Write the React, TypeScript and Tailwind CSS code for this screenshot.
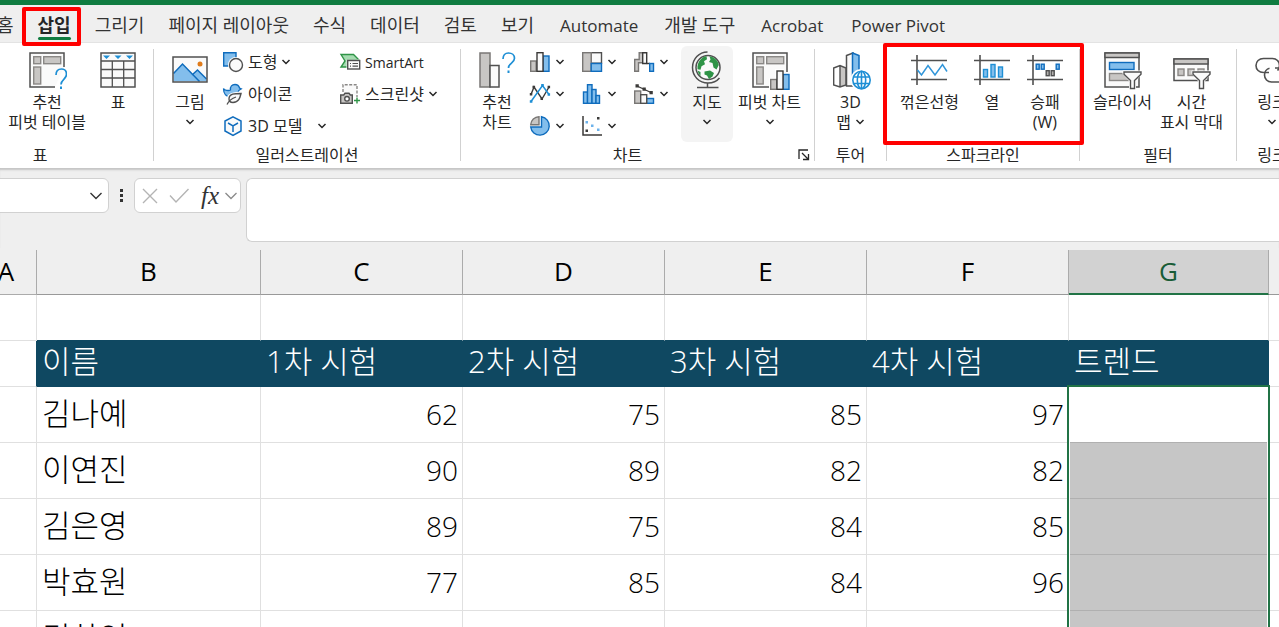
import React from "react";
import type { ReactNode } from "react";
import clsx from "clsx";

const tabs = [
  "홈",
  "삽입",
  "그리기",
  "페이지 레이아웃",
  "수식",
  "데이터",
  "검토",
  "보기",
  "Automate",
  "개발 도구",
  "Acrobat",
  "Power Pivot",
];

const columns = ["B", "C", "D", "E", "F", "G"];
const headings = ["이름", "1차 시험", "2차 시험", "3차 시험", "4차 시험", "트렌드"];

const students = [
  { name: "김나예", scores: [62, 75, 85, 97] },
  { name: "이연진", scores: [90, 89, 82, 82] },
  { name: "김은영", scores: [89, 75, 84, 85] },
  { name: "박효원", scores: [77, 85, 84, 96] },
  { name: "김하인", scores: [] },
];

/* ---------- icons ---------- */

const GRAY = "#505050";
const FILL = "#c8c6c4";
const BLUE = "#0f6cbd";
const SKY = "#83beec";

function Chevron({ className }: { className?: string }) {
  return (
    <svg width="10" height="8" viewBox="0 0 10 8" fill="none" className={clsx("shrink-0", className)}>
      <path d="M1.500 2 5 5.500 8.500 2" stroke="#262626" strokeWidth="1.500" />
    </svg>
  );
}

function BigIcon({ children }: { children: ReactNode }) {
  return (
    <svg width="40" height="40" viewBox="0 0 40 40" fill="none" className="mb-0.5 shrink-0">
      {children}
    </svg>
  );
}

function SmallIcon({ children }: { children: ReactNode }) {
  return (
    <svg width="22" height="22" viewBox="0 0 22 22" fill="none" className="shrink-0">
      {children}
    </svg>
  );
}

function PivotTableIcon() {
  return (
    <BigIcon>
      <path d="M37 17V3H3v34h25" fill="#fafafa" stroke={GRAY} strokeWidth="1.5" />
      <g fill={FILL} stroke="#8a8886" strokeWidth="1.4">
        <rect x="6.7" y="6.7" width="7" height="7" />
        <rect x="16.7" y="6.7" width="17" height="7" />
        <rect x="6.7" y="17" width="7" height="17" />
      </g>
      <path d="M29 25c0-4 2.200-6 5.500-6s5 2.200 5 5.300c0 5-5.500 5-5.500 10.200" stroke="#1e8fd5" strokeWidth="1.7" />
      <rect x="33" y="36.5" width="2" height="2.5" fill="#1e8fd5" />
    </BigIcon>
  );
}

function TableIcon() {
  return (
    <BigIcon>
      <rect x="3" y="3" width="34" height="34" fill="#fafafa" stroke={GRAY} strokeWidth="1.5" />
      <path d="M3 11h34M3 19.500h34M3 28h34M14.300 11v26M25.700 11v26" stroke={GRAY} strokeWidth="1.3" />
      <path d="M5 5.500h7L8.500 9zM16.500 5.500h7L20 9zM28 5.500h7L31.500 9z" fill="#1e8fd5" />
    </BigIcon>
  );
}

function PictureIcon() {
  return (
    <BigIcon>
      <rect x="3" y="7" width="34" height="25" fill="#fafafa" />
      <path d="M3.700 23 12.500 14l17 17.300H3.700z" fill={SKY} />
      <path d="M22 25l5.500-5 9 9v2.300h-8z" fill={SKY} />
      <path d="M3.500 23.500 12.500 14l17 17.500M22 25l5.500-5 9 9" stroke={BLUE} strokeWidth="1.5" />
      <rect x="3" y="7" width="34" height="25" stroke={GRAY} strokeWidth="1.5" />
      <circle cx="30" cy="14" r="2.5" fill="#e07b1a" />
    </BigIcon>
  );
}

function ShapesIcon() {
  return (
    <SmallIcon>
      <path d="M8 15H1.700V1.700H14v6" fill={SKY} stroke={BLUE} strokeWidth="1.4" />
      <circle cx="14" cy="14" r="8" fill="#fff" />
      <circle cx="14" cy="14" r="6.5" fill="#fafafa" stroke={GRAY} strokeWidth="1.4" />
    </SmallIcon>
  );
}

function IconsIcon() {
  return (
    <SmallIcon>
      <path
        d="M1.500 5.500c1 2 5 2.500 7 1.500-.5-3.500 1.500-5.500 4.500-5.500 2.500 0 4 1.500 4.500 3.500l1.800.8-2.300 1.500c-1 3-4 6.700-8.500 6.700-4 0-7-3-7-8.500z"
        fill={SKY}
        stroke={BLUE}
        strokeWidth="1.3"
      />
      <path d="M5 22v-7c0-4 5-6.500 17-6.500V22z" fill="#fff" />
      <path
        d="M19 10.500c-6 0-12 0-12 5.500 0 2 1.500 3.500 4 3.500 6 0 7-5 8-9z"
        fill="#fafafa"
        stroke={GRAY}
        strokeWidth="1.4"
      />
      <path d="M5 21.500c2-4 4.500-6 9-7.500" stroke={GRAY} strokeWidth="1.3" />
    </SmallIcon>
  );
}

function CubeIcon() {
  return (
    <SmallIcon>
      <path d="M11 1.800 19 6v10l-8 4.500L3 16V6z" fill="#fafafa" stroke={BLUE} strokeWidth="1.5" />
      <path d="M6 8l5 2.800L16 8M11 10.800V17" stroke={BLUE} strokeWidth="1.5" />
    </SmallIcon>
  );
}

function SmartArtIcon() {
  return (
    <SmallIcon>
      <path d="M2 3.500h12.500L20 9H8.500v7H2l4-6z" fill="#a5dbb0" stroke="#2f9447" strokeWidth="1.4" />
      <path d="M7.500 8.500H22V19H7.500z" fill="#fff" />
      <rect x="8.7" y="9.5" width="12" height="8.5" fill="#fafafa" stroke={GRAY} strokeWidth="1.4" />
      <path d="M11 12.500h1M13.500 12.500H19M11 15.200h1M13.500 15.200H19" stroke={GRAY} strokeWidth="1.2" />
    </SmallIcon>
  );
}

function ScreenshotIcon() {
  return (
    <SmallIcon>
      <path d="M4 9V1.700h14V14" fill="#fafafa" stroke="#8a8886" strokeWidth="1.4" strokeDasharray="3 1.5" />
      <path d="M1.700 12h3l1.300-1.700h4l1.300 1.700h2v8.300H1.700z" fill={FILL} stroke={GRAY} strokeWidth="1.4" />
      <circle cx="8" cy="15.8" r="2.3" fill="#fff" stroke={GRAY} strokeWidth="1.4" />
      <path d="M18 14.500v6M15 17.500h6" stroke="#2f9447" strokeWidth="1.4" />
    </SmallIcon>
  );
}

function RecommendedChartIcon() {
  return (
    <BigIcon>
      <rect x="3" y="3" width="10" height="34" fill={FILL} stroke="#797775" strokeWidth="1.5" />
      <rect x="13" y="15.5" width="9" height="21.5" fill="#fafafa" stroke={GRAY} strokeWidth="1.5" />
      <path d="M26 9c0-4 2.200-6 5.500-6s6 2.200 6 5.300c0 5-6 4.700-6 9.700" stroke="#1e8fd5" strokeWidth="1.7" />
      <rect x="30.5" y="20.5" width="2" height="2.5" fill="#1e8fd5" />
    </BigIcon>
  );
}

function ColumnChartIcon() {
  return (
    <SmallIcon>
      <rect x="1.7" y="10" width="5.5" height="10.3" fill={FILL} stroke="#797775" strokeWidth="1.4" />
      <rect x="14" y="5" width="6" height="15.3" fill={SKY} stroke={BLUE} strokeWidth="1.4" />
      <rect x="8" y="1.7" width="6" height="18.6" fill="#fafafa" stroke="#3b3a39" strokeWidth="1.4" />
    </SmallIcon>
  );
}

function TreemapIcon() {
  return (
    <SmallIcon>
      <rect x="10" y="1.7" width="10.5" height="10.5" fill="#fafafa" stroke={GRAY} strokeWidth="1.4" />
      <rect x="1.7" y="1.7" width="8.5" height="18.6" fill={FILL} stroke="#797775" strokeWidth="1.4" />
      <rect x="10.2" y="12.5" width="10.3" height="7.8" fill={SKY} stroke={BLUE} strokeWidth="1.4" />
    </SmallIcon>
  );
}

function WaterfallIcon() {
  return (
    <SmallIcon>
      <path d="M1.700 20.300V8.500h4.500V1.700h3.500v10H5.500v8.600z" fill={FILL} stroke="#797775" strokeWidth="1.4" />
      <path d="M9.700 1.700h4v10.800h-4z" fill="#fafafa" stroke="#3b3a39" strokeWidth="1.4" />
      <path d="M13.700 12.500H17" stroke="#3b3a39" strokeWidth="1.4" />
      <rect x="16.7" y="12.5" width="3.8" height="7.8" fill={SKY} stroke={BLUE} strokeWidth="1.4" />
    </SmallIcon>
  );
}

function LineChartIcon() {
  return (
    <SmallIcon>
      <path d="M2 11.500 5 4l8 12 7-12" stroke="#3b3a39" strokeWidth="1.4" />
      <path d="M2 18.500 13.500 2.500 20 11.500" stroke="#1e8fd5" strokeWidth="1.5" />
      <path d="M3.500 2.700h2.600v2.600H3.500zM.8 10h2.500v2.500H.8zM11.500 14.500H14V17h-2.500zM18.600 2.700h2.500v2.600h-2.500z" fill="#3b3a39" />
      <path d="M12.200 1h2.600v2.600h-2.600zM.8 17.200h2.600v2.600H.8zM18.600 10.200h2.500v2.500h-2.500z" fill="#1e8fd5" />
    </SmallIcon>
  );
}

function HistogramIcon() {
  return (
    <SmallIcon>
      <g fill={SKY} stroke={BLUE} strokeWidth="1.4">
        <rect x="2.5" y="9" width="4" height="11.3" />
        <rect x="6.5" y="1.7" width="4.5" height="18.6" />
        <rect x="11" y="6.5" width="4" height="13.8" />
        <rect x="15" y="12.5" width="3.5" height="7.8" />
      </g>
    </SmallIcon>
  );
}

function ComboIcon() {
  return (
    <SmallIcon>
      <rect x="1.7" y="8" width="6" height="12.3" fill={FILL} stroke="#797775" strokeWidth="1.4" />
      <rect x="13.5" y="15.5" width="7" height="4.8" fill={SKY} stroke={BLUE} strokeWidth="1.4" />
      <rect x="7.7" y="11.7" width="6" height="8.6" fill="#fafafa" stroke={GRAY} strokeWidth="1.4" />
      <path d="M4 3l7.500 3.500 6.500 3" stroke="#3b3a39" strokeWidth="1.3" />
      <path d="M2.500 1.300h3.300v3.300H2.500zM9.500 4.500h3.300v3.300H9.500zM16.500 8h3.300v3.300h-3.300z" fill="#3b3a39" />
    </SmallIcon>
  );
}

function PieIcon() {
  return (
    <SmallIcon>
      <path d="M12.500 1.700a9.300 9.300 0 1 1-10.800 10.300h10.800z" fill={SKY} stroke={BLUE} strokeWidth="1.4" />
      <path d="M10 1.700V9.700H1.700A8.600 8.600 0 0 1 10 1.700z" fill={FILL} stroke="#797775" strokeWidth="1.4" />
    </SmallIcon>
  );
}

function ScatterIcon() {
  return (
    <SmallIcon>
      <path d="M2 1v19h19" stroke="#3b3a39" strokeWidth="1.5" />
      <path d="M16 2h2.500v2.500H16zM4.500 14.500H7V17H4.500z" fill="#3b3a39" />
      <path d="M4.500 6H7v2.500H4.500zM10 9.500h2.500V12H10zM16 13.500h2.500V16H16z" fill="#6cb2eb" />
    </SmallIcon>
  );
}

function GlobeIcon() {
  return (
    <BigIcon>
      <circle cx="21" cy="17.5" r="12" fill="#fafafa" stroke={GRAY} strokeWidth="1.5" />
      <path d="M14 9c1.500-1.500 3.500-2.500 5.500-2.700l.5 3-3 2 1 3-3.500 2-1 3.500-3-.5c-.5-4 1-8 3.500-10.300z" fill="#2f9447" />
      <path d="M22.500 6.300c5 .7 8.500 4.200 9.300 8.700l-2.300 4.500-3-2-1-4.500-3.500-1 1.500-2.500z" fill="#2f9447" />
      <path d="M17.500 21.500l5.500-1 4 2.500-1.500 3.500-3.500 2.500-2-3.500-2.500-1z" fill="#2f9447" />
      <path d="M10.500 20.500l3 1.500v4c-1.500-1.500-2.500-3.500-3-5.500z" fill="#2f9447" />
      <path d="M20.500 2C12 2 5.500 9 5.500 17.500S12 33 21 33c5 0 9-2 11.500-5" stroke={GRAY} strokeWidth="1.5" />
      <path d="M20.500 33v4M10 37.500h21.500" stroke={GRAY} strokeWidth="1.5" />
    </BigIcon>
  );
}

function PivotChartIcon() {
  return (
    <BigIcon>
      <path d="M37 22V3H3v34h17" fill="#fafafa" stroke={GRAY} strokeWidth="1.5" />
      <g fill={FILL} stroke="#8a8886" strokeWidth="1.4">
        <rect x="6.7" y="6.7" width="7" height="7" />
        <rect x="16.7" y="6.7" width="17" height="7" />
        <rect x="6.7" y="17" width="6.5" height="17" />
      </g>
      <path d="M19 40V28h6v-9h9v4h6v17z" fill="#fff" />
      <rect x="20.7" y="29.5" width="6" height="9.8" fill={FILL} stroke="#797775" strokeWidth="1.4" />
      <rect x="33" y="24.5" width="6" height="14.8" fill={SKY} stroke={BLUE} strokeWidth="1.4" />
      <rect x="27" y="21" width="6" height="18.3" fill="#fafafa" stroke="#3b3a39" strokeWidth="1.4" />
    </BigIcon>
  );
}

function MapIcon() {
  return (
    <BigIcon>
      <path d="M9 15.500 15 18v17l-6 2z" fill={FILL} />
      <path d="M2.700 18 9 15.500l6 2.500v17L9 37l-6.300-2zM9 15.500V37" stroke={GRAY} strokeWidth="1.4" />
      <path d="M15.500 5.500 22 3v33h-6.500z" fill="#fafafa" stroke={GRAY} strokeWidth="1.5" />
      <path d="M21.500 3l6.500 2.500V24l-6.500 8z" fill={SKY} stroke={BLUE} strokeWidth="1.5" />
      <circle cx="30.500" cy="30" r="11" fill="#fff" />
      <g stroke="#1e8fd5" strokeWidth="1.6">
        <circle cx="30.500" cy="30" r="8.7" />
        <ellipse cx="30.500" cy="30" rx="4.2" ry="8.7" />
        <path d="M30.500 21.300v17.400M22.500 27h16M22.500 33.500h16" />
      </g>
    </BigIcon>
  );
}

function SparkAxes() {
  return <path d="M2 10.500h36M2 29.500h36M8 5v30" stroke={GRAY} strokeWidth="1.6" />;
}

function SparkLineIcon() {
  return (
    <BigIcon>
      <SparkAxes />
      <path d="M8.500 20l4 5 6.500-9.500 7 9.500 7.500-10.500 4.500 7" stroke="#3095d9" strokeWidth="1.5" />
    </BigIcon>
  );
}

function SparkColumnIcon() {
  return (
    <BigIcon>
      <SparkAxes />
      <g fill={SKY} stroke="#1e8fd5" strokeWidth="1.4">
        <rect x="11.5" y="19.5" width="4" height="7.5" />
        <rect x="19" y="14.5" width="4" height="12.5" />
        <rect x="26.5" y="17" width="4" height="10" />
      </g>
    </BigIcon>
  );
}

function SparkWinLossIcon() {
  return (
    <BigIcon>
      <SparkAxes />
      <g fill={SKY} stroke={BLUE} strokeWidth="1.4">
        <rect x="11.2" y="14.2" width="3" height="5" />
        <rect x="16.2" y="14.2" width="3" height="5" />
        <rect x="31.2" y="14.2" width="3" height="5" />
      </g>
      <g fill="#b3b0ad" stroke={GRAY} strokeWidth="1.4">
        <rect x="21.2" y="20.7" width="3" height="5" />
        <rect x="26.2" y="20.7" width="3" height="5" />
      </g>
    </BigIcon>
  );
}

function Funnel() {
  return (
    <>
      <path d="M20.500 20.500h20v3L34 31v9h-7v-9l-6.500-7.500z" fill="#fff" />
      <path d="M22 22h17v2.200l-6.500 6.300v8h-4v-8L22 24.200z" fill="#fafafa" stroke={GRAY} strokeWidth="1.4" />
    </>
  );
}

function SlicerIcon() {
  return (
    <BigIcon>
      <rect x="3" y="3" width="34" height="34" fill="#fafafa" stroke={GRAY} strokeWidth="1.5" />
      <path d="M3 3h34v4.500H3z" fill={FILL} stroke={GRAY} strokeWidth="1.4" />
      <rect x="7.5" y="12.5" width="24.5" height="7" fill={SKY} stroke={BLUE} strokeWidth="1.4" />
      <rect x="7.5" y="23.5" width="20" height="7" fill={FILL} stroke="#8a8886" strokeWidth="1.4" />
      <Funnel />
    </BigIcon>
  );
}

function TimelineIcon() {
  return (
    <BigIcon>
      <rect x="3" y="9" width="34" height="21.5" fill="#fafafa" stroke={GRAY} strokeWidth="1.5" />
      <path d="M3 9h34v5H3z" fill={FILL} stroke={GRAY} strokeWidth="1.4" />
      <g fill={FILL} stroke="#8a8886" strokeWidth="1.4">
        <rect x="7" y="19" width="6" height="6.5" />
        <rect x="17" y="19" width="6" height="6.5" />
        <rect x="27" y="19" width="6" height="6.5" />
      </g>
      <Funnel />
    </BigIcon>
  );
}

function LinkIcon() {
  return (
    <BigIcon>
      <g stroke={GRAY} strokeWidth="1.6">
        <path d="M17 22.500h-5.500C7 22.500 4 19.500 4 15.500S7 8.500 11.500 8.500h9c4 0 7 3 7 7 0 2-.5 3.500-2 5" />
        <path d="M23 18h5.500c4.500 0 7.500 3 7.500 7s-3 7-7.500 7h-9c-4 0-7-3-7-7 0-3 2-6 5-6.700" />
      </g>
    </BigIcon>
  );
}

/* ---------- ribbon ---------- */

type LargeButtonProps = {
  icon: ReactNode;
  lines: string[];
  chevron?: "below" | "inline";
  className?: string;
};

function LargeButton({ icon, lines, chevron, className }: LargeButtonProps) {
  return (
    <button type="button" className={clsx("flex h-24 shrink-0 flex-col items-center rounded-md pt-1", className)}>
      {icon}
      {lines.map((line, i) => (
        <span key={line} className="flex h-5 items-center gap-1 whitespace-nowrap leading-5">
          {line}
          {chevron === "inline" && i === lines.length - 1 && <Chevron />}
        </span>
      ))}
      {chevron === "below" && <Chevron className="mt-1.5" />}
    </button>
  );
}

type SmallButtonProps = {
  icon: ReactNode;
  label: string;
  chevron?: boolean;
  latin?: boolean;
};

function SmallButton({ icon, label, chevron, latin }: SmallButtonProps) {
  return (
    <button type="button" className="flex h-8 items-center whitespace-nowrap">
      {icon}
      <span className={clsx("mx-1", latin && "text-[14px]")}>{label}</span>
      {chevron && <Chevron />}
    </button>
  );
}

function ChartButton({ icon, label }: { icon: ReactNode; label: string }) {
  return (
    <button type="button" aria-label={label} className="flex h-8 w-13 items-center gap-1">
      {icon}
      <Chevron />
    </button>
  );
}

type GroupProps = {
  label: string;
  className?: string;
  bodyClass?: string;
  launcher?: boolean;
  children: ReactNode;
};

function Group({ label, className, bodyClass, launcher, children }: GroupProps) {
  return (
    <section className={clsx("flex shrink-0", className)}>
      <div className="flex min-w-0 flex-1 flex-col">
        <div className={clsx("flex h-25 items-start pt-[3px]", bodyClass)}>{children}</div>
        <div className="flex h-6 items-center">
          <span className="flex-1 text-center whitespace-nowrap">{label}</span>
          {launcher && (
            <button type="button" aria-label="차트 옵션" className="p-1">
              <svg width="12" height="12" viewBox="0 0 12 12" fill="none" stroke="#262626" strokeWidth="1.3">
                <path d="M1 10V1h9M4 4l6 6M10.500 5v5.500H5" />
              </svg>
            </button>
          )}
        </div>
      </div>
      <div className="mt-1.5 h-28 w-px bg-[#d1d1d1]" />
    </section>
  );
}

function Ribbon() {
  return (
    <div className="flex h-[126px] overflow-hidden border-t border-[#e3e3e3] bg-white text-[16px] text-[#262626]">
      <Group label="표" className="-ml-[73px] w-[227px]" bodyClass="justify-end gap-3 pr-[15px]">
        <LargeButton icon={<PivotTableIcon />} lines={["추천", "피벗 테이블"]} />
        <LargeButton icon={<TableIcon />} lines={["표"]} />
      </Group>

      <Group label="일러스트레이션" className="w-[307px]" bodyClass="pl-4">
        <LargeButton icon={<PictureIcon />} lines={["그림"]} chevron="below" />
        <div className="ml-3 flex w-[117px] flex-col">
          <SmallButton icon={<ShapesIcon />} label="도형" chevron />
          <SmallButton icon={<IconsIcon />} label="아이콘" />
          <div className="flex items-center justify-between pr-3">
            <SmallButton icon={<CubeIcon />} label="3D 모델" />
            <button type="button" aria-label="3D 모델 메뉴">
              <Chevron />
            </button>
          </div>
        </div>
        <div className="flex flex-col">
          <SmallButton icon={<SmartArtIcon />} label="SmartArt" latin />
          <SmallButton icon={<ScreenshotIcon />} label="스크린샷" chevron />
        </div>
      </Group>

      <Group label="차트" className="w-[354px]" bodyClass="pl-4" launcher>
        <LargeButton icon={<RecommendedChartIcon />} lines={["추천", "차트"]} />
        <div className="ml-3 grid grid-cols-3">
          <ChartButton icon={<ColumnChartIcon />} label="세로 막대형" />
          <ChartButton icon={<TreemapIcon />} label="계층 구조" />
          <ChartButton icon={<WaterfallIcon />} label="폭포" />
          <ChartButton icon={<LineChartIcon />} label="꺾은선형 차트" />
          <ChartButton icon={<HistogramIcon />} label="통계" />
          <ChartButton icon={<ComboIcon />} label="콤보" />
          <ChartButton icon={<PieIcon />} label="원형" />
          <ChartButton icon={<ScatterIcon />} label="분산형" />
        </div>
        <LargeButton icon={<GlobeIcon />} lines={["지도"]} chevron="below" className="-ml-1 w-13 bg-[#f4f4f4]" />
        <LargeButton icon={<PivotChartIcon />} lines={["피벗 차트"]} chevron="below" className="ml-[5px]" />
      </Group>

      <Group label="투어" className="w-[72px]" bodyClass="justify-center">
        <LargeButton icon={<MapIcon />} lines={["3D", "맵"]} chevron="inline" />
      </Group>

      <Group label="스파크라인" className="relative w-[193px]" bodyClass="gap-[13px] pl-[13px]">
        <LargeButton icon={<SparkLineIcon />} lines={["꺾은선형"]} />
        <LargeButton icon={<SparkColumnIcon />} lines={["열"]} />
        <LargeButton icon={<SparkWinLossIcon />} lines={["승패", "(W)"]} />
        <div className="pointer-events-none absolute -left-1 -right-1 top-0 h-[102px] rounded-xs border-4 border-[#ff0000]" />
      </Group>

      <Group label="필터" className="w-[157px]" bodyClass="gap-2 pl-[13px]">
        <LargeButton icon={<SlicerIcon />} lines={["슬라이서"]} />
        <LargeButton icon={<TimelineIcon />} lines={["시간", "표시 막대"]} />
      </Group>

      <Group label="링크" className="w-[71px]" bodyClass="justify-center">
        <LargeButton icon={<LinkIcon />} lines={["링크"]} chevron="below" />
      </Group>
    </div>
  );
}

function TabBar() {
  return (
    <nav className="-ml-[15px] flex h-[37px] items-center text-[18px] text-[#333]">
      {tabs.map((tab) => {
        const active = tab === "삽입";
        return (
          <button
            key={tab}
            type="button"
            className={clsx(
              "relative h-full shrink-0 pt-1 whitespace-nowrap",
              active && "font-bold text-[#262626]",
              /^[A-Z]/.test(tab) ? "px-[14px] text-[17px]" : "px-3",
            )}
          >
            {tab}
            {active && (
              <>
                <span className="absolute inset-x-3 bottom-0.5 h-[3px] rounded-full bg-[#107c41]" />
                <span className="absolute -left-1 right-0.5 top-0.5 -bottom-1 z-10 rounded-xs border-4 border-[#ff0000]" />
              </>
            )}
          </button>
        );
      })}
    </nav>
  );
}

function FormulaBar() {
  return (
    <div className="flex h-20 items-start bg-[#efefef] pt-2.5 shadow-[inset_0_3px_2px_-1px_#c4c4c4]">
      <div className="-ml-2 flex h-[35px] w-[117px] items-center rounded-md border border-[#d1d1d1] bg-white">
        <input aria-label="이름 상자" className="h-full min-w-0 flex-1 bg-transparent pl-3 outline-none" />
        <button type="button" aria-label="이름 목록" className="px-1.5">
          <svg width="12" height="8" viewBox="0 0 12 8" fill="none" stroke="#333" strokeWidth="1.4">
            <path d="M.5 1 6 6.500 11.500 1" />
          </svg>
        </button>
      </div>
      <svg width="25" height="35" viewBox="0 0 25 35" fill="#333" className="shrink-0">
        <path d="M11 11h3v3h-3zM11 16h3v3h-3zM11 21h3v3h-3z" />
      </svg>
      <div className="flex h-[35px] w-[107px] items-center rounded-md border border-[#d1d1d1] bg-white pl-1.5">
        <button type="button" aria-label="취소" className="w-7">
          <svg width="18" height="18" viewBox="0 0 18 18" stroke="#b4b4b4" strokeWidth="1.4">
            <path d="M2 2l14 14M16 2 2 16" />
          </svg>
        </button>
        <button type="button" aria-label="입력" className="w-8">
          <svg width="20" height="18" viewBox="0 0 20 18" fill="none" stroke="#b4b4b4" strokeWidth="1.4">
            <path d="M1 8.500 7 15 19.500 2" />
          </svg>
        </button>
        <button
          type="button"
          className="flex items-center gap-1.5 font-['Liberation_Serif',serif] text-[25px] font-medium italic leading-7 text-[#333]"
        >
          fx
          <svg width="12" height="8" viewBox="0 0 12 8" fill="none" stroke="#8a8a8a" strokeWidth="1.3">
            <path d="M.5 1 6 6.500 11.500 1" />
          </svg>
        </button>
      </div>
      <textarea
        aria-label="수식 입력줄"
        className="ml-[5px] block h-16 min-w-0 flex-1 resize-none rounded-l-md border border-r-0 border-[#d1d1d1] bg-white outline-none"
      />
    </div>
  );
}

/* ---------- sheet ---------- */

const line = "border-r border-b border-[#e0e0e0]";

function Sheet() {
  return (
    <table className="w-full table-fixed border-separate border-spacing-0 bg-white text-[28px] font-light text-black">
      <colgroup>
        <col className="w-[37px]" />
        <col className="w-[224px]" />
        <col className="w-[202px]" />
        <col className="w-[202px]" />
        <col className="w-[202px]" />
        <col className="w-[202px]" />
        <col className="w-[200px]" />
        <col />
      </colgroup>
      <thead>
        <tr className="h-[45px] bg-[#efefef] text-[26px]">
          <th className="border-r border-b border-[#ababab] p-0 pb-0.5 font-normal">
            <span className="-ml-6 block">A</span>
          </th>
          {columns.map((col) => (
            <th
              key={col}
              className={clsx(
                "border-r border-[#ababab] p-0 font-normal",
                col === "G"
                  ? "border-b-2 border-b-[#217346] bg-[#d2d2d2] text-[#185c37]"
                  : "border-b border-b-[#999] pb-0.5",
              )}
            >
              {col}
            </th>
          ))}
          <th className="border-b border-[#999]" />
        </tr>
      </thead>
      <tbody>
        <tr className="h-[46px]">
          <td className={line} />
          {columns.map((col) => (
            <td key={col} className="border-r border-b border-[#e0e0e0] border-b-[#0f4861]" />
          ))}
          <td className="border-b border-[#e0e0e0]" />
        </tr>
        <tr className="h-[46px] text-[31px] leading-[41px] text-white">
          <td className="border-r border-b border-r-[#0f4861] border-b-[#e0e0e0]" />
          {headings.map((heading) => (
            <td key={heading} className="border-b border-[#0f4861] bg-[#0f4861] p-0 pb-1 pl-[5px] whitespace-nowrap">
              {heading}
            </td>
          ))}
          <td className="border-b border-[#e0e0e0]" />
        </tr>
        {students.map((student, row) => (
          <tr key={student.name} className="h-14">
            <td className={line} />
            <td className={clsx(line, "p-0 pb-0.5 pl-[5px] text-[31px] leading-[53px]")}>{student.name}</td>
            {[0, 1, 2, 3].map((i) => (
              <td key={i} className={clsx(line, "p-0 pr-1 text-right leading-[55px]")}>
                {student.scores[i]}
              </td>
            ))}
            <td className={clsx("relative border-b border-[#b0b0b0] p-0", row > 0 && "bg-[#c6c6c6]")}>
              {row === 0 && (
                <div className="pointer-events-none absolute -top-0.5 -right-px -left-0.5 z-10 h-[300px] border-2 border-[#217346] shadow-[inset_0_0_0_1px_#fff]" />
              )}
            </td>
            <td className="border-b border-l border-[#e0e0e0]" />
          </tr>
        ))}
      </tbody>
    </table>
  );
}

export default function App() {
  return (
    <div className="flex h-screen flex-col overflow-hidden bg-[#efefef] font-['Open_Sans','Noto_Sans_CJK_KR',sans-serif]">
      <div className="h-[5px] shrink-0 bg-[#107c41]" />
      <div className="shrink-0">
        <TabBar />
        <Ribbon />
        <FormulaBar />
      </div>
      <div className="shrink-0 pt-0.5">
        <Sheet />
      </div>
    </div>
  );
}
